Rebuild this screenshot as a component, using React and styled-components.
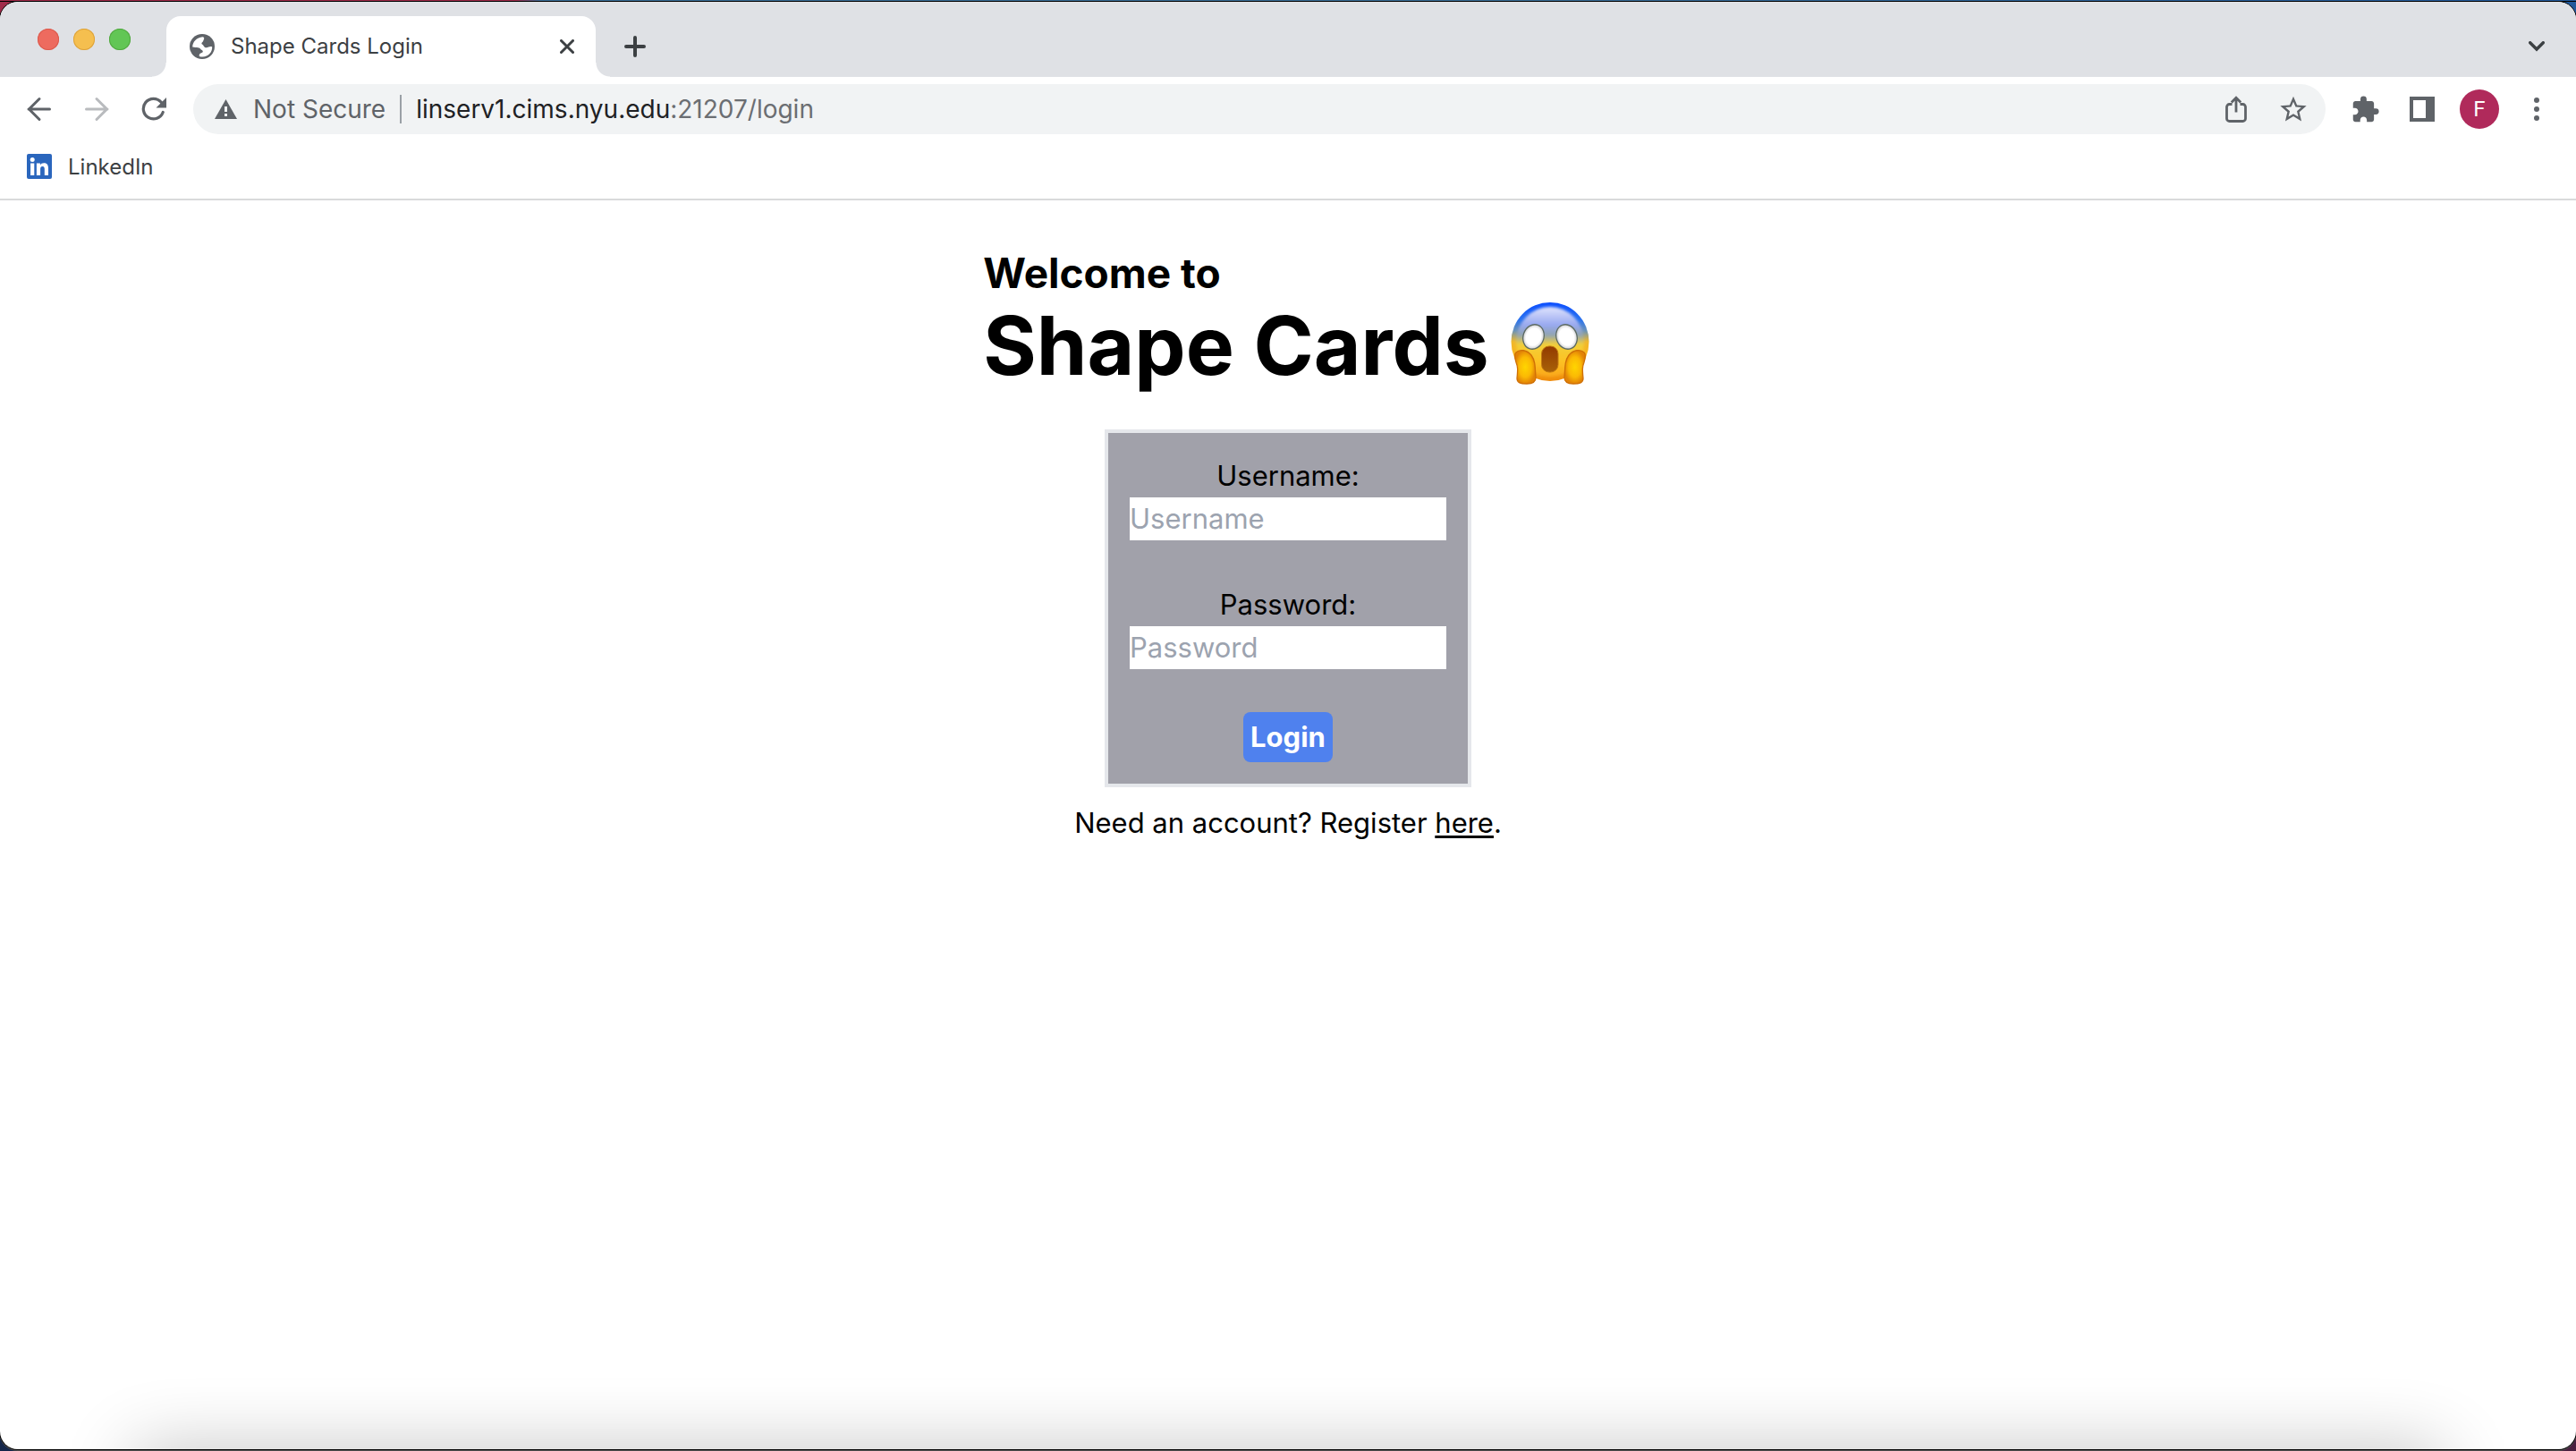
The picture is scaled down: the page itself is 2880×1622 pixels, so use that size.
import React from 'react';
import styled, { createGlobalStyle } from 'styled-components';

const GlobalStyle = createGlobalStyle`
  *, *::before, *::after { box-sizing: border-box; }
  body {
    margin: 0;
    font-family: Inter, "Liberation Sans", sans-serif;
    color: #000;
  }
  button { font: inherit; border: 0; padding: 0; background: none; cursor: pointer; }
  svg { display: block; flex: none; }
`;

const Desktop = styled.div`
  display: flex;
  flex-direction: column;
  min-height: 100vh;
  padding: 2px 0;
  background:
    linear-gradient(#000, #000) 0 1px / 100% 1px no-repeat,
    linear-gradient(90deg, #a02c4a 0 20%, #3b6f98 21% 60%, #235a9c) 0 0 / 100% 50% no-repeat,
    linear-gradient(90deg, #14264a 0 50%, #4a2040 50%) 0 100% / 100% 50% no-repeat;
`;

const Window = styled.div`
  position: relative;
  display: flex;
  flex-direction: column;
  flex: 1;
  overflow: hidden;
  border-radius: 20px;
  background: #fff;
  box-shadow: 0 0 0 1px #000, 0 1px 0 1px #555;
`;

const TabStrip = styled.header`
  display: flex;
  align-items: center;
  height: 84px;
  padding: 0 12px 0 42px;
  background: #dfe1e5;
`;

const Lights = styled.div`
  display: flex;
  gap: 16px;
  margin-right: 40px;
`;

const Light = styled.button`
  width: 24px;
  height: 24px;
  border-radius: 50%;
  background: ${(p) => p.$fill};
  box-shadow: inset 0 0 0 1px ${(p) => p.$edge};
`;

const Tab = styled.div`
  position: relative;
  display: flex;
  align-items: center;
  align-self: flex-end;
  width: 480px;
  height: 68px;
  margin-right: 12px;
  padding: 0 24px 0 26px;
  border-radius: 16px 16px 0 0;
  background: #fff;

  &::before, &::after {
    content: "";
    position: absolute;
    bottom: 0;
    width: 16px;
    height: 16px;
  }
  &::before {
    right: 100%;
    background: radial-gradient(circle at 0 0, transparent 15px, #fff 16px);
  }
  &::after {
    left: 100%;
    background: radial-gradient(circle at 100% 0, transparent 15px, #fff 16px);
  }
`;

const TabTitle = styled.span`
  flex: 1;
  margin-left: 18px;
  font-size: 24px;
  line-height: 32px;
  color: #3c4043;
`;

const CloseButton = styled.button`
  display: grid;
  place-items: center;
  width: 16px;
  height: 16px;
`;

const IconButton = styled.button`
  display: grid;
  place-items: center;
  flex: none;
  width: 64px;
  height: 56px;
`;

const StripButton = styled(IconButton)`
  align-self: flex-end;
  height: 68px;
  margin-left: ${(p) => (p.$end ? 'auto' : 0)};
`;

const Toolbar = styled.nav`
  display: flex;
  align-items: center;
  padding: 8px 12px;
`;

const AddressBar = styled.div`
  display: flex;
  align-items: center;
  flex: 1;
  height: 56px;
  margin: 0 12px;
  padding: 0 4px 0 24px;
  border-radius: 28px;
  background: #f1f3f4;
  font-size: 28px;
  line-height: 32px;
`;

const Security = styled.span`
  margin-left: 18px;
  padding-right: 16px;
  border-right: 2px solid #9aa0a6;
  color: #5f6368;
`;

const Url = styled.div`
  flex: 1;
  margin-left: 16px;
  outline: none;
  color: #202124;
`;

const UrlPath = styled.span`
  color: #6b6e72;
`;

const Avatar = styled.span`
  display: grid;
  place-items: center;
  width: 44px;
  height: 44px;
  border-radius: 50%;
  background: #b02a5b;
  color: #fff;
  font-family: Roboto, sans-serif;
  font-size: 24px;
`;

const Bookmarks = styled.div`
  display: flex;
  height: 66px;
  padding: 0 30px 8px;
  border-bottom: 2px solid #d9dadb;
`;

const Bookmark = styled.a`
  display: flex;
  align-items: center;
  gap: 18px;
  font-size: 24px;
  color: #3c4043;
  text-decoration: none;
`;

const Page = styled.main`
  display: flex;
  flex-direction: column;
  align-items: center;
  padding: 48px 16px;
  font-size: 31px;
  line-height: 48px;
`;

const Heading = styled.h1`
  margin: 0 0 46px;
  font-weight: 700;
`;

const Welcome = styled.span`
  display: block;
  font-size: 46px;
  line-height: 66px;
`;

const Name = styled.span`
  display: flex;
  align-items: center;
  gap: 20px;
  font-size: 91px;
  line-height: 96px;
`;

const LoginForm = styled.form`
  display: flex;
  flex-direction: column;
  align-items: center;
  gap: 48px;
  padding: 24px;
  border: 4px solid #e5e7eb;
  background: #a1a1aa;
`;

const Field = styled.div`
  display: flex;
  flex-direction: column;
  text-align: center;
`;

const TextInput = styled.input`
  width: 354px;
  height: 48px;
  padding: 0;
  border: 0;
  border-radius: 0;
  background: #fff;
  font: inherit;

  &::placeholder { color: #9ca3af; opacity: 1; }
`;

const SubmitButton = styled.button`
  && {
    padding: 4px 8px;
    border-radius: 8px;
    background: #4f81ee;
    color: #fff;
    font-weight: 700;
  }
`;

const Register = styled.p`
  margin: 16px 0 0;

  a {
    color: inherit;
    text-decoration: underline;
    text-decoration-thickness: 3px;
    text-underline-offset: 3px;
  }
`;

const DockShade = styled.div`
  position: absolute;
  right: 150px;
  bottom: -80px;
  left: 150px;
  height: 80px;
  box-shadow: 0 0 80px rgba(0, 0, 0, 0.24);
  pointer-events: none;
`;

const GREY = '#5f6368';

const Globe = () => (
  <svg width="28" height="28" viewBox="0 0 28 28" fill="none">
    <circle cx="14" cy="14" r="14" fill={GREY} />
    <path
      fill="#fff"
      d="M3.200 14.600C3.200 8.500 8 3.800 14.500 3.200c1.400.2 2 1 1.600 2.200L15 8.200c-.3 1-1.500 1.200-1.600 2.200 0 .9.800 1 1.400 1.600.8 1 1 2.300 2.400 2.900 1.300.5 2.600.3 4-.3 1.500-.6 2.800-.7 4-.2.300 5.600-4.200 10.900-10.700 11.100-1.300 0-2.600-.1-3.700-.6-.2-1.800.2-2.700 1.600-3.300 1.300-.6 2.400-.8 2.400-2 0-1.100-.7-1.500-1.600-1.900-1-.4-1-1.600-2.200-2-1.200-.3-2.500-.2-7.800-1.100z"
    />
  </svg>
);

const Cross = () => (
  <svg width="16" height="16" viewBox="0 0 16 16" stroke="#3c4043" strokeWidth="3" strokeLinecap="round">
    <path d="M1.500 1.500l13 13M14.500 1.500l-13 13" />
  </svg>
);

const Plus = () => (
  <svg width="24" height="24" viewBox="0 0 24 24" stroke="#3c4043" strokeWidth="4" strokeLinecap="round">
    <path d="M12 2v20M2 12h20" />
  </svg>
);

const Chevron = () => (
  <svg width="18" height="12" viewBox="0 0 18 12" fill="none" stroke="#3c4043" strokeWidth="3.400" strokeLinecap="round">
    <path d="M1.700 1.700L9 9l7.300-7.300" />
  </svg>
);

const Arrow = ({ forward }) => (
  <svg width="28" height="28" viewBox="0 0 28 28" fill="none" stroke={forward ? '#b9bbbe' : GREY} strokeWidth="3" strokeLinecap="round">
    {forward ? <path d="M2.500 14H26M14 2.500L25.500 14 14 25.500" /> : <path d="M25.500 14H2M14 2.500L2.500 14 14 25.500" />}
  </svg>
);

const Reload = () => (
  <svg width="28" height="28" viewBox="0 0 28 28" fill="none">
    <path d="M24.200 17.500a11.300 11.300 0 1 1-2-11.200l1.500 2" stroke={GREY} strokeWidth="3.200" strokeLinecap="round" />
    <path d="M28 1v11.500H16.500z" fill={GREY} />
  </svg>
);

const Warning = () => (
  <svg width="25" height="22" viewBox="0 0 25 22">
    <path d="M12.500 0L25 22H0z" fill={GREY} />
    <path d="M11 8h3v6h-3zM11 16h3v3h-3z" fill="#f1f3f4" />
  </svg>
);

const Share = () => (
  <svg width="24" height="30" viewBox="0 0 24 30" fill="none" stroke={GREY} strokeWidth="2.800">
    <path d="M7.500 9.500h-3a3 3 0 0 0-3 3v13a3 3 0 0 0 3 3h15a3 3 0 0 0 3-3v-13a3 3 0 0 0-3-3h-3M12 18.500V2.500M6.800 7.500L12 2.300l5.200 5.200" />
  </svg>
);

const Star = () => (
  <svg width="32" height="32" viewBox="0 0 24 24" fill={GREY}>
    <path d="M23 9.240l-7.900-.68L12 1.300 8.900 8.570 1 9.240l6 5.190L5.200 22.140l6.800-4.100 6.800 4.100-1.790-7.710zM12 15.900l-4.100 2.470 1.090-4.660L5.370 10.570l4.770-.41L12 5.770l1.870 4.400 4.770.41-3.620 3.130 1.090 4.660z" />
  </svg>
);

const Puzzle = () => (
  <svg width="33" height="33" viewBox="0 0 24 24" fill={GREY}>
    <path d="M20.500 11H19V7c0-1.100-.9-2-2-2h-4V3.500a2.500 2.500 0 0 0-5 0V5H4c-1.100 0-2 .9-2 2v3.800h1.500c1.490 0 2.700 1.210 2.700 2.700s-1.210 2.700-2.700 2.700H2V20c0 1.100.9 2 2 2h3.800v-1.500c0-1.490 1.210-2.700 2.700-2.700s2.700 1.210 2.700 2.700V22H17c1.100 0 2-.9 2-2v-4h1.500a2.500 2.500 0 0 0 0-5z" />
  </svg>
);

const SidePanel = () => (
  <svg width="28" height="28" viewBox="0 0 28 28">
    <path fillRule="evenodd" d="M0 0h28v28H0zM4 4v20h14V4z" fill={GREY} />
  </svg>
);

const Dots = () => (
  <svg width="6" height="26" viewBox="0 0 6 26" fill={GREY}>
    <circle cx="3" cy="3" r="3" />
    <circle cx="3" cy="13" r="3" />
    <circle cx="3" cy="23" r="3" />
  </svg>
);

const LinkedInLogo = () => (
  <svg width="28" height="28" viewBox="0 0 28 28">
    <rect width="28" height="28" rx="2" fill="#2a66bd" />
    <g fill="#fff">
      <circle cx="6.200" cy="6.400" r="2.500" />
      <path d="M4.100 10.500h4.200V24H4.100zM10.900 10.500h4v1.900c.8-1.400 2.200-2.200 4.200-2.200 4 0 4.900 2.600 4.900 6.200V24h-4.200v-6.700c0-1.800-.3-3.400-2.300-3.400s-2.400 1.600-2.400 3.300V24h-4.200z" />
    </g>
  </svg>
);

const ScreamFace = () => (
  <svg width="96" height="96" viewBox="0 2 96 96" role="img" aria-label="Face screaming in fear">
    <defs>
      <linearGradient id="face" x1="0" y1="0" x2="0" y2="1">
        <stop offset="0" stopColor="#0a4dff" />
        <stop offset=".22" stopColor="#2a72ee" />
        <stop offset=".36" stopColor="#6b93b8" />
        <stop offset=".5" stopColor="#f0b82c" />
        <stop offset=".75" stopColor="#fdb515" />
        <stop offset="1" stopColor="#ee8a0c" />
      </linearGradient>
      <linearGradient id="glow" x1="0" y1="0" x2="0" y2="1">
        <stop offset="0" stopColor="#dfe3fd" />
        <stop offset=".26" stopColor="#98a9f0" />
        <stop offset=".4" stopColor="#8fa3b4" />
        <stop offset=".54" stopColor="#f2cf38" />
        <stop offset=".8" stopColor="#fdc022" />
        <stop offset="1" stopColor="#f9a61a" />
      </linearGradient>
      <linearGradient id="mouth" x1="0" y1="0" x2="0" y2="1">
        <stop offset="0" stopColor="#923a00" />
        <stop offset="1" stopColor="#a86208" />
      </linearGradient>
      <radialGradient id="hand">
        <stop offset="0" stopColor="#ffd500" />
        <stop offset=".6" stopColor="#fbb904" />
        <stop offset="1" stopColor="#e28306" />
      </radialGradient>
      <radialGradient id="eye">
        <stop offset=".7" stopColor="#fff" />
        <stop offset="1" stopColor="#cfcfd2" />
      </radialGradient>
      <filter id="soft" x="-10%" y="-10%" width="120%" height="120%">
        <feGaussianBlur stdDeviation="1.500" />
      </filter>
    </defs>
    <ellipse cx="48" cy="46" rx="43.500" ry="44" fill="url(#face)" />
    <ellipse cx="48" cy="46" rx="38" ry="39" fill="url(#glow)" filter="url(#soft)" />
    <g fill="url(#eye)" stroke="#5c6a62" strokeWidth="1.300">
      <ellipse cx="29.500" cy="40.500" rx="11.500" ry="14" transform="rotate(20 29.500 40.500)" />
      <ellipse cx="66.500" cy="40.500" rx="11.500" ry="14" transform="rotate(-20 66.500 40.500)" />
    </g>
    <rect x="38.500" y="51" width="18.500" height="29" rx="8.500" fill="url(#mouth)" stroke="#c07810" />
    <g fill="url(#hand)" stroke="#cf7006" strokeWidth="1.300">
      <path id="palm" d="M10 58c4-4 12-3 17 3 5 7 4 14 5 25 0 5-3 7-10 7s-11-1-11-6c1-10 1-13-1-18-2-6-2-9 0-11z" />
      <use href="#palm" transform="translate(96 0) scale(-1 1)" />
    </g>
  </svg>
);

export default function App() {
  return (
    <>
      <GlobalStyle />
      <Desktop>
        <Window>
          <TabStrip>
            <Lights>
              <Light aria-label="Close window" $fill="#ed6b5f" $edge="#db5a4d" />
              <Light aria-label="Minimize window" $fill="#f5bf4f" $edge="#dda23b" />
              <Light aria-label="Zoom window" $fill="#62c655" $edge="#51a73f" />
            </Lights>
            <Tab>
              <Globe />
              <TabTitle>Shape Cards Login</TabTitle>
              <CloseButton aria-label="Close tab"><Cross /></CloseButton>
            </Tab>
            <StripButton aria-label="New tab"><Plus /></StripButton>
            <StripButton aria-label="Search tabs" $end><Chevron /></StripButton>
          </TabStrip>
          <Toolbar>
            <IconButton aria-label="Back"><Arrow /></IconButton>
            <IconButton aria-label="Forward"><Arrow forward /></IconButton>
            <IconButton aria-label="Reload"><Reload /></IconButton>
            <AddressBar>
              <Warning />
              <Security>Not Secure</Security>
              <Url role="textbox" aria-label="Address" contentEditable suppressContentEditableWarning spellCheck={false}>
                linserv1.cims.nyu.edu<UrlPath>:21207/login</UrlPath>
              </Url>
              <IconButton aria-label="Share"><Share /></IconButton>
              <IconButton aria-label="Bookmark this tab"><Star /></IconButton>
            </AddressBar>
            <IconButton aria-label="Extensions"><Puzzle /></IconButton>
            <IconButton aria-label="Side panel"><SidePanel /></IconButton>
            <IconButton aria-label="Profile"><Avatar>F</Avatar></IconButton>
            <IconButton aria-label="Menu"><Dots /></IconButton>
          </Toolbar>
          <Bookmarks>
            <Bookmark href="#linkedin"><LinkedInLogo />LinkedIn</Bookmark>
          </Bookmarks>
          <Page>
            <Heading>
              <Welcome>Welcome to</Welcome>
              <Name>Shape Cards <ScreamFace /></Name>
            </Heading>
            <LoginForm onSubmit={(e) => e.preventDefault()}>
              <Field>
                <label htmlFor="username">Username:</label>
                <TextInput id="username" type="text" placeholder="Username" />
              </Field>
              <Field>
                <label htmlFor="password">Password:</label>
                <TextInput id="password" type="password" placeholder="Password" />
              </Field>
              <SubmitButton type="submit">Login</SubmitButton>
            </LoginForm>
            <Register>Need an account? Register <a href="#register">here</a>.</Register>
          </Page>
          <DockShade />
        </Window>
      </Desktop>
    </>
  );
}
